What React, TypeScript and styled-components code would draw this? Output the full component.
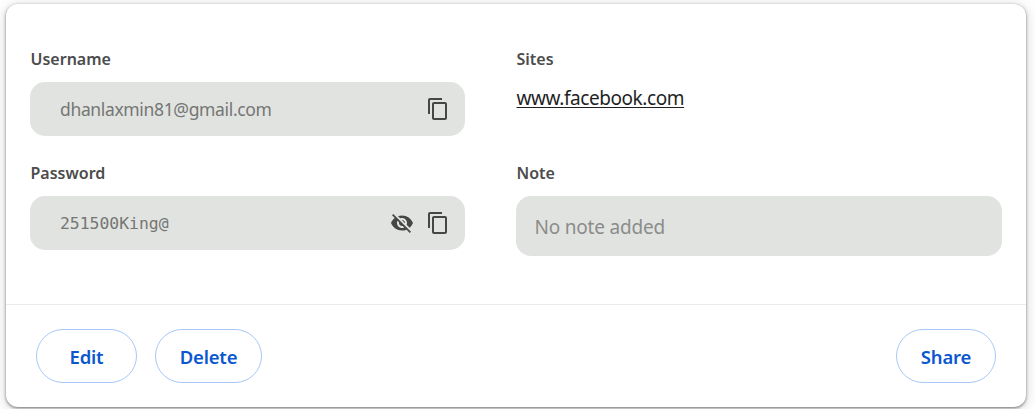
import React from 'react';
import styled, { createGlobalStyle } from 'styled-components';

const GlobalStyle = createGlobalStyle`
  * { box-sizing: border-box; }
  html, body { margin: 0; height: 409px; overflow: hidden; background: #fff; }
  body { font-family: "Noto Sans", "Open Sans", sans-serif; }
`;

const Page = styled.main`
  width: 1035px;
  height: 409px;
  padding: 4px 9px 2px 6px;
  overflow: hidden;
`;

const Card = styled.section`
  display: flex;
  flex-direction: column;
  height: 403px;
  border-radius: 12px;
  background: #fff;
  box-shadow: 0 1px 3px rgba(0, 0, 0, 0.5), 0 2px 12px 2px rgba(0, 0, 0, 0.13);
`;

const Details = styled.div`
  display: grid;
  grid-template-columns: 435px 486px;
  grid-template-rows: 114px 1fr;
  column-gap: 51px;
  height: 300px;
  padding: 42px 24px 0;
`;

const Field = styled.div`
  display: flex;
  flex-direction: column;
  align-items: stretch;
`;

const Label = styled.div`
  height: 36px;
  padding-left: 0.5px;
  line-height: 26px;
  font-size: 16px;
  font-weight: 600;
  color: #4c4c4c;
`;

const ValueBox = styled.div`
  display: flex;
  align-items: center;
  gap: 12px;
  height: 54px;
  padding: 0 15px 0 30px;
  border-radius: 15px;
  background: #e1e3e0;
  color: #454745;
`;

const Value = styled.span<{ $mono?: boolean }>`
  flex: 1;
  padding-top: ${({ $mono }) => ($mono ? '2px' : '0')};
  font-family: ${({ $mono }) => ($mono ? '"DejaVu Sans Mono", monospace' : 'inherit')};
  font-size: ${({ $mono }) => ($mono ? '16.4px' : '17.5px')};
  letter-spacing: ${({ $mono }) => ($mono ? '0' : '-0.35px')};
  line-height: 24px;
  color: #757674;
`;

const IconButton = styled.button`
  display: flex;
  width: 24px;
  height: 24px;
  padding: 0;
  border: 0;
  background: none;
  color: inherit;
`;

const SiteLink = styled.a`
  align-self: flex-start;
  margin-top: 3px;
  padding-left: 0.5px;
  font-size: 19px;
  line-height: 26px;
  letter-spacing: -0.43px;
  color: #1f1f1f;
  text-decoration: underline;
  text-decoration-thickness: 1px;
  text-underline-offset: 2px;
`;

const NoteBox = styled.div`
  display: flex;
  align-items: center;
  height: 60px;
  padding: 2px 18.5px 0;
  border-radius: 15px;
  background: #e1e3e0;
  color: #8b8c8a;
  font-size: 19px;
  letter-spacing: -0.2px;
`;

const Actions = styled.footer`
  display: flex;
  gap: 18px;
  height: 103px;
  padding: 24px 30px;
  border-top: 1px solid #ebebeb;
`;

const ActionButton = styled.button<{ $width: number; $end?: boolean }>`
  width: ${({ $width }) => $width}px;
  height: 54px;
  margin-left: ${({ $end }) => ($end ? 'auto' : '0')};
  padding: 0;
  border: 1px solid #a8c7fa;
  border-radius: 27px;
  background: #fff;
  color: #0b57d0;
  font: 600 18.5px "Noto Sans", "Open Sans", sans-serif;
  letter-spacing: -0.2px;
`;

const CopyIcon = () => (
  <svg width="24" height="24" viewBox="0 0 24 24" fill="currentColor">
    <path d="M16 1H4c-1.1 0-2 .9-2 2v14h2V3h12V1zm3 4H8c-1.1 0-2 .9-2 2v14c0 1.1.9 2 2 2h11c1.1 0 2-.9 2-2V7c0-1.1-.9-2-2-2zm0 16H8V7h11v14z" />
  </svg>
);

const HiddenIcon = () => (
  <svg width="24" height="24" viewBox="0 0 24 24" fill="currentColor">
    <path d="M12 7c2.76 0 5 2.24 5 5 0 .65-.13 1.26-.36 1.83l2.92 2.92c1.51-1.26 2.7-2.89 3.43-4.75-1.73-4.39-6-7.5-11-7.5-1.4 0-2.74.25-3.98.7l2.16 2.16C10.74 7.13 11.35 7 12 7zM2 4.27l2.28 2.28.46.46C3.08 8.3 1.78 10.02 1 12c1.73 4.39 6 7.5 11 7.5 1.55 0 3.03-.3 4.38-.84l.42.42L19.73 22 21 20.73 3.27 3 2 4.27zM7.53 9.8l1.55 1.55c-.05.21-.08.43-.08.65 0 1.66 1.34 3 3 3 .22 0 .44-.03.65-.08l1.55 1.55c-.67.33-1.41.53-2.2.53-2.76 0-5-2.24-5-5 0-.79.2-1.53.53-2.2zm4.31-.78l3.15 3.15.02-.16c0-1.66-1.34-3-3-3l-.17.01z" />
  </svg>
);

export default function App() {
  return (
    <>
      <GlobalStyle />
      <Page>
        <Card>
          <Details>
            <Field>
              <Label>Username</Label>
              <ValueBox>
                <Value>dhanlaxmin81@gmail.com</Value>
                <IconButton aria-label="Copy username"><CopyIcon /></IconButton>
              </ValueBox>
            </Field>
            <Field>
              <Label>Sites</Label>
              <SiteLink>www.facebook.com</SiteLink>
            </Field>
            <Field>
              <Label>Password</Label>
              <ValueBox>
                <Value $mono>251500King@</Value>
                <IconButton aria-label="Hide password"><HiddenIcon /></IconButton>
                <IconButton aria-label="Copy password"><CopyIcon /></IconButton>
              </ValueBox>
            </Field>
            <Field>
              <Label>Note</Label>
              <NoteBox>No note added</NoteBox>
            </Field>
          </Details>
          <Actions>
            <ActionButton $width={101}>Edit</ActionButton>
            <ActionButton $width={107}>Delete</ActionButton>
            <ActionButton $width={100} $end>Share</ActionButton>
          </Actions>
        </Card>
      </Page>
    </>
  );
}
